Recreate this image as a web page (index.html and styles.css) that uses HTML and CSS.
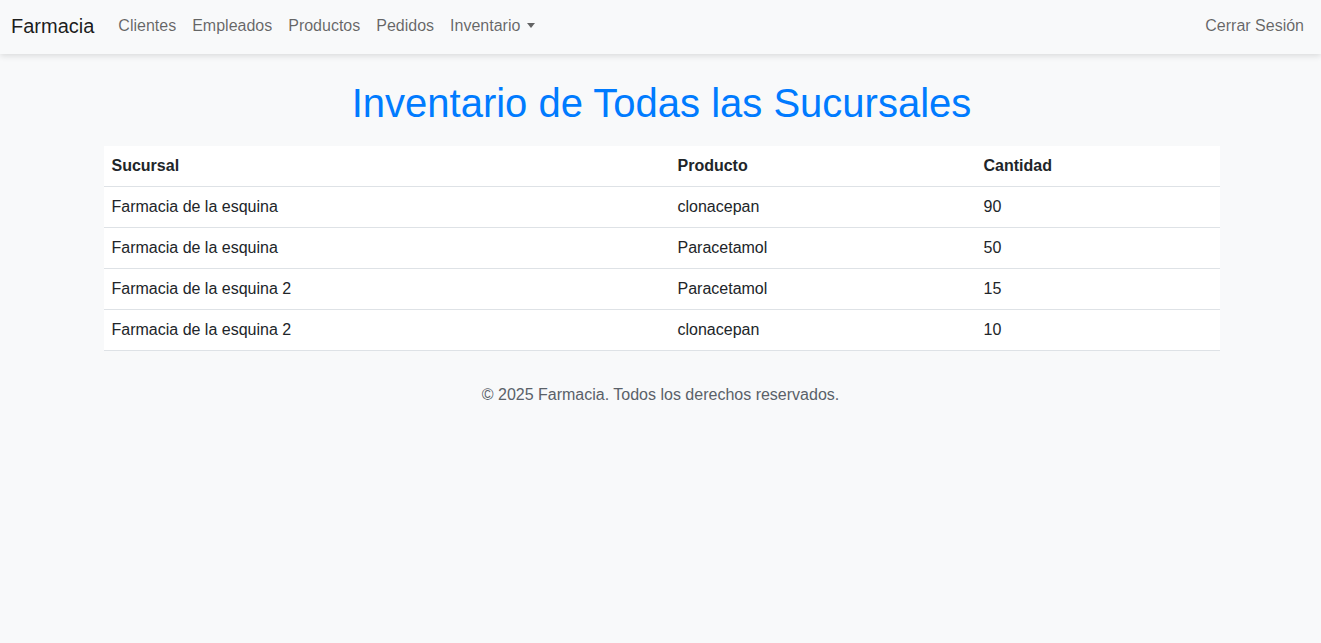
FILE: index.html
```html
<!DOCTYPE html>
<html lang="es">
<head>
<meta charset="utf-8">
<title>Inventario</title>
<link rel="stylesheet" href="styles.css">
</head>
<body>
<nav class="navbar">
  <a class="brand" href="#">Farmacia</a>
  <ul class="nav">
    <li><a class="nav-link" href="#">Clientes</a></li>
    <li><a class="nav-link" href="#">Empleados</a></li>
    <li><a class="nav-link" href="#">Productos</a></li>
    <li><a class="nav-link" href="#">Pedidos</a></li>
    <li><a class="nav-link dropdown" href="#">Inventario</a></li>
  </ul>
  <ul class="nav nav-right">
    <li><a class="nav-link" href="#">Cerrar Sesión</a></li>
  </ul>
</nav>
<main class="container">
  <h1 class="title">Inventario de Todas las Sucursales</h1>
  <table class="table">
    <thead>
      <tr><th class="c1">Sucursal</th><th class="c2">Producto</th><th class="c3">Cantidad</th></tr>
    </thead>
    <tbody>
      <tr><td>Farmacia de la esquina</td><td>clonacepan</td><td>90</td></tr>
      <tr><td>Farmacia de la esquina</td><td>Paracetamol</td><td>50</td></tr>
      <tr><td>Farmacia de la esquina 2</td><td>Paracetamol</td><td>15</td></tr>
      <tr><td>Farmacia de la esquina 2</td><td>clonacepan</td><td>10</td></tr>
    </tbody>
  </table>
</main>
<footer class="footer">© 2025 Farmacia. Todos los derechos reservados.</footer>
</body>
</html>
```
FILE: styles.css
```css
* { box-sizing: border-box; }
body {
  margin: 0;
  background: #f8f9fa;
  font-family: "Liberation Sans", Arial, sans-serif;
  font-size: 16px;
  line-height: 24px;
  color: #212529;
}
.navbar {
  display: flex;
  align-items: center;
  height: 54px;
  padding: 0 9px 2px 11px;
  background: #f8f9fa;
  box-shadow: 0 2px 6px rgba(0,0,0,0.12);
}
.brand {
  font-size: 20px;
  line-height: 30px;
  color: rgba(0,0,0,0.9);
  text-decoration: none;
  margin-right: 16px;
}
.nav {
  list-style: none;
  margin: 0;
  padding: 0;
  display: flex;
}
.nav-right { margin-left: auto; }
.nav-link {
  display: block;
  padding: 8px;
  color: rgba(0,0,0,0.6);
  text-decoration: none;
}
.dropdown::after {
  content: "";
  display: inline-block;
  margin-left: 7px;
  vertical-align: 3px;
  border-top: 5px solid;
  border-left: 4px solid transparent;
  border-right: 4px solid transparent;
}
.container {
  max-width: 1140px;
  margin: 0 auto;
  padding: 0 11px 0 13px;
}
.title {
  margin: 25px 0 19px;
  text-align: center;
  font-weight: 400;
  font-size: 40px;
  line-height: 48px;
  color: #007bff;
}
.table {
  width: 100%;
  border-collapse: collapse;
  background: #fff;
  margin-bottom: 16px;
}
.table th, .table td {
  text-align: left;
  padding: 8px;
  border-bottom: 1px solid #dee2e6;
}
.table th { font-weight: 700; }
.c1 { width: 566px; }
.c2 { width: 306px; }
.footer {
  text-align: center;
  padding: 16px 0;
  color: #5a6169;
}
```
